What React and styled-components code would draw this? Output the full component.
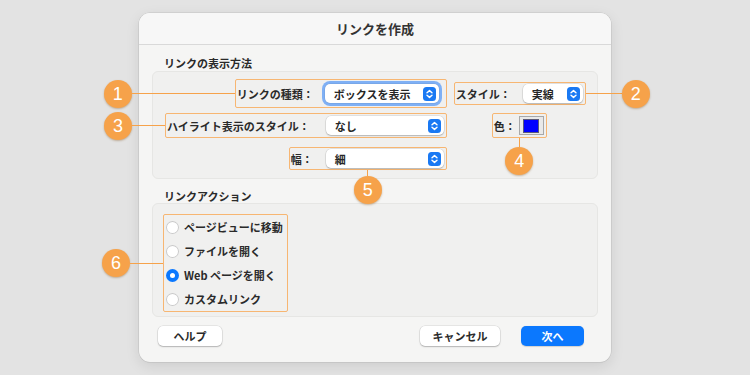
import React from "react";
import styled, { createGlobalStyle, css } from "styled-components";

const Global = createGlobalStyle`
  html, body { margin: 0; padding: 0; }
  body {
    background: #e3e3e3;
    font-family: "Noto Sans CJK JP", "Noto Sans", sans-serif;
    color: #262626;
    -webkit-font-smoothing: antialiased;
  }
`;

const ORANGE = "#f6a24a";
const BOX = "#f7b672";

const Stage = styled.div`
  width: 750px;
  height: 375px;
  display: flex;
  align-items: center;
  justify-content: center;
  overflow: hidden;
`;

const Window = styled.div`
  width: 472px;
  height: 349px;
  background: #f5f5f4;
  border-radius: 11px;
  box-shadow: 0 0 0 0.5px rgba(0, 0, 0, 0.12), 0 4px 14px rgba(0, 0, 0, 0.1);
  display: flex;
  flex-direction: column;
`;

const TitleBar = styled.div`
  height: 31px;
  border-bottom: 1px solid #d9d9d9;
  background: #f7f7f7;
  border-radius: 11px 11px 0 0;
  display: flex;
  align-items: center;
  justify-content: center;
  font-size: 13px;
  font-weight: 700;
  color: #333;
`;

const Body = styled.div`
  padding: 11px 13px 0 13px;
  display: flex;
  flex-direction: column;
`;

const SectionTitle = styled.div`
  font-size: 11px;
  font-weight: 700;
  line-height: 14px;
  padding-left: 12px;
  margin-top: ${(p) => p.$mt || 0}px;
  margin-bottom: ${(p) => p.$mb || 0}px;
  color: #2a2a2a;
`;

const Group = styled.div`
  background: #f0f0ef;
  border: 1px solid #e6e6e4;
  border-radius: 6px;
`;

const FormGrid = styled(Group)`
  display: grid;
  grid-template-columns: 1fr 131px;
  column-gap: 7px;
  row-gap: 5px;
  padding: 7px 15px 8px 12px;
  align-items: center;
`;

const Outline = styled.div`
  position: relative;
  border: 1px solid ${BOX};
  border-radius: 2px;
  display: inline-flex;
  align-items: center;
  box-sizing: border-box;
`;

const FieldBox = styled(Outline)`
  justify-self: ${(p) => p.$justify || "end"};
  height: ${(p) => (p.$h ? `${p.$h}px` : "auto")};
  padding: ${(p) => p.$pad}px ${(p) => p.$padR}px ${(p) => p.$pad}px 1px;
  margin-top: ${(p) => p.$mt || 0}px;
  gap: ${(p) => p.$gap}px;
`;

const Label = styled.span`
  font-size: 11px;
  font-weight: 700;
  line-height: 14px;
  white-space: nowrap;
  color: #2a2a2a;
`;

const SelectBox = styled.div`
  width: ${(p) => p.$w}px;
  height: 19px;
  box-sizing: border-box;
  background: #fff;
  border-radius: 5px;
  box-shadow: 0 0 0 0.5px rgba(0, 0, 0, 0.12), 0 1px 1.5px rgba(0, 0, 0, 0.2);
  display: flex;
  align-items: center;
  justify-content: space-between;
  padding: 0 3px 0 9px;
  font-size: 11px;
  font-weight: 700;
  color: #262626;
  ${(p) =>
    p.$focus &&
    css`
      box-shadow: 0 0 0 0.5px rgba(0, 0, 0, 0.1), 0 0 0 3px #7fb0f5;
    `}
`;

const Stepper = () => (
  <svg width="13" height="14" viewBox="0 0 13 14">
    <rect x="0" y="0" width="13" height="14" rx="3.5" fill="#1a79f3" />
    <path d="M4 5.8 L6.5 3.6 L9 5.8" fill="none" stroke="#fff" strokeWidth="1.4" strokeLinecap="round" strokeLinejoin="round" />
    <path d="M4 8.2 L6.5 10.4 L9 8.2" fill="none" stroke="#fff" strokeWidth="1.4" strokeLinecap="round" strokeLinejoin="round" />
  </svg>
);

const Select = ({ value, width = 118, focus }) => (
  <SelectBox $w={width} $focus={focus}>
    <span>{value}</span>
    <Stepper />
  </SelectBox>
);

const Swatch = styled.div`
  width: 25px;
  height: 19px;
  box-sizing: border-box;
  border: 1px solid #a8a8a8;
  background: #e9e9e9;
  display: flex;
  align-items: center;
  justify-content: center;
  &::after {
    content: "";
    width: 14px;
    height: 12px;
    background: #0000ff;
    border: 1px solid #5a5a7a;
  }
`;

const ActionGroup = styled(Group)`
  padding: 10px 10px 4px 10px;
  height: 114px;
  box-sizing: border-box;
`;

const RadioBox = styled(Outline)`
  flex-direction: column;
  align-items: stretch;
  padding: 0 4px 0 2px;
`;

const RadioRow = styled.label`
  height: 24px;
  display: flex;
  align-items: center;
  gap: 5px;
  font-size: 11px;
  font-weight: 700;
  white-space: nowrap;
  color: #2a2a2a;
`;

const RadioDot = styled.span`
  width: 13px;
  height: 13px;
  box-sizing: border-box;
  border-radius: 50%;
  background: #fff;
  box-shadow: inset 0 0 0 1px #c9c9c9;
  display: flex;
  align-items: center;
  justify-content: center;
  ${(p) =>
    p.$on &&
    css`
      background: #0b78fe;
      box-shadow: none;
      &::after {
        content: "";
        width: 5px;
        height: 5px;
        border-radius: 50%;
        background: #fff;
      }
    `}
`;

const Footer = styled.div`
  display: flex;
  align-items: center;
  padding: 9px 27px 0 19px;
`;

const Button = styled.button`
  height: 20px;
  width: ${(p) => p.$w}px;
  border: none;
  border-radius: 5px;
  font-family: inherit;
  font-size: 11px;
  font-weight: 700;
  padding: 0;
  margin-left: ${(p) => p.$ml || 0}px;
  background: ${(p) => (p.$primary ? "#0b78fe" : "#fff")};
  color: ${(p) => (p.$primary ? "#fff" : "#2a2a2a")};
  box-shadow: ${(p) =>
    p.$primary
      ? "0 0.5px 1px rgba(0,0,0,0.15)"
      : "0 0 0 0.5px rgba(0,0,0,0.12), 0 1px 1.5px rgba(0,0,0,0.22)"};
`;

const Spacer = styled.div`
  flex: 1;
`;

/* Annotation callouts (overlay) */
const Callout = styled.div`
  position: absolute;
  display: flex;
  align-items: center;
  pointer-events: none;
  ${(p) =>
    p.$side === "left" &&
    css`
      right: 100%;
      top: 50%;
      transform: translateY(-50%);
      margin-right: 1px;
    `}
  ${(p) =>
    p.$side === "right" &&
    css`
      left: 100%;
      top: 50%;
      transform: translateY(-50%);
      margin-left: 1px;
    `}
  ${(p) =>
    p.$side === "bottom" &&
    css`
      top: 100%;
      left: 50%;
      transform: translateX(-50%);
      flex-direction: column;
      margin-top: 1px;
    `}
`;

const Line = styled.span`
  background: ${ORANGE};
  ${(p) =>
    p.$side === "bottom"
      ? css`
          width: 1px;
          height: ${p.$len}px;
        `
      : css`
          height: 1px;
          width: ${p.$len}px;
        `}
`;

const Badge = styled.span`
  width: 28px;
  height: 28px;
  border-radius: 50%;
  background: ${ORANGE};
  color: #fff;
  font-family: "Liberation Sans", Arial, sans-serif;
  font-size: 18px;
  line-height: 28px;
  text-align: center;
  box-shadow: 0 1px 2px rgba(120, 70, 10, 0.35);
  flex: none;
`;

const Mark = ({ n, side, len }) => (
  <Callout $side={side}>
    {side === "left" ? (
      <>
        <Badge>{n}</Badge>
        <Line $side={side} $len={len} />
      </>
    ) : (
      <>
        <Line $side={side} $len={len} />
        <Badge>{n}</Badge>
      </>
    )}
  </Callout>
);

export default function App() {
  return (
    <Stage>
      <Global />
      <Window>
        <TitleBar>リンクを作成</TitleBar>
        <Body>
          <SectionTitle $mb={1}>リンクの表示方法</SectionTitle>
          <FormGrid>
            <FieldBox $h={29} $pad={4} $padR={7} $gap={11}>
              <Label>リンクの種類：</Label>
              <Select value="ボックスを表示" focus width={114} />
              <Mark n="1" side="left" len={103} />
            </FieldBox>
            <FieldBox $h={23} $justify="start" $pad={1} $padR={2} $gap={12}>
              <Label>スタイル：</Label>
              <Select value="実線" width={60} />
              <Mark n="2" side="right" len={36} />
            </FieldBox>

            <FieldBox $pad={2} $padR={2} $gap={16}>
              <Label>ハイライト表示のスタイル：</Label>
              <Select value="なし" />
              <Mark n="3" side="left" len={33} />
            </FieldBox>
            <FieldBox $justify="center" $pad={2} $padR={2} $gap={3}>
              <Label>色：</Label>
              <Swatch />
              <Mark n="4" side="bottom" len={9} />
            </FieldBox>

            <FieldBox $pad={1} $padR={2} $gap={13} $mt={4}>
              <Label>幅：</Label>
              <Select value="細" />
              <Mark n="5" side="bottom" len={6} />
            </FieldBox>
            <div />
          </FormGrid>

          <SectionTitle $mt={10}>リンクアクション</SectionTitle>
          <ActionGroup>
            <RadioBox>
              <RadioRow>
                <RadioDot />
                ページビューに移動
              </RadioRow>
              <RadioRow>
                <RadioDot />
                ファイルを開く
              </RadioRow>
              <RadioRow>
                <RadioDot $on />
                Web ページを開く
              </RadioRow>
              <RadioRow>
                <RadioDot />
                カスタムリンク
              </RadioRow>
              <Mark n="6" side="left" len={33} />
            </RadioBox>
          </ActionGroup>
        </Body>
        <Footer>
          <Button $w={64}>ヘルプ</Button>
          <Spacer />
          <Button $w={80}>キャンセル</Button>
          <Button $w={63} $ml={21} $primary>
            次へ
          </Button>
        </Footer>
      </Window>
    </Stage>
  );
}
